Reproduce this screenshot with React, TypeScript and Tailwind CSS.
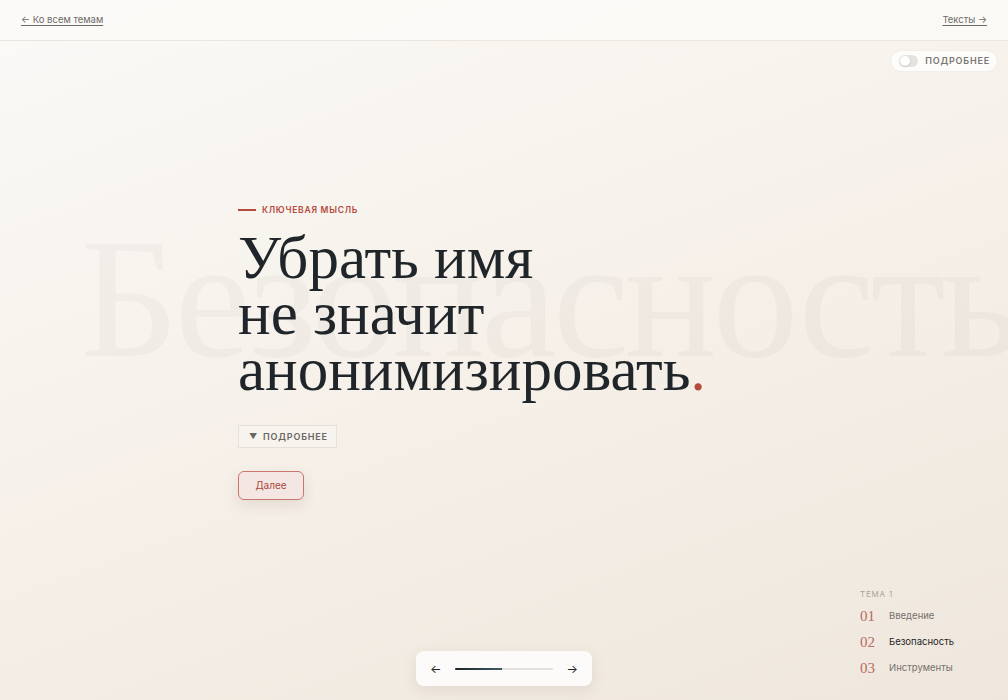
import React from "react";

export default function App() {
  return (
    <div
      className="relative w-[1008px] h-[700px] overflow-hidden bg-[linear-gradient(160deg,#fbfaf8_0%,#f6f1ea_45%,#efe7dd_100%)]"
      style={{ fontFamily: "Inter, 'Noto Sans', sans-serif" }}
    >
      {/* watermark */}
      <div
        className="absolute left-[80px] top-[212px] text-[172px] leading-none tracking-[-0.025em] text-[#2b2b2b]/[0.035] whitespace-nowrap select-none"
        style={{ fontFamily: "'Liberation Serif', serif" }}
      >
        Безопасность
      </div>

      {/* header */}
      <header className="relative h-[41px] flex items-center justify-between px-[21px] bg-[#fbfaf7]/80 border-b border-[#ebe6de]">
        <a className="text-[9.5px] text-[#6e6a66] underline underline-offset-2">← Ко всем темам</a>
        <a className="text-[9.5px] text-[#6e6a66] underline underline-offset-2">Тексты →</a>
      </header>

      {/* toggle */}
      <div className="absolute right-[10px] top-[50px] h-[22px] w-[108px] flex items-center gap-[7px] pl-[8px] pr-[7px] rounded-full bg-white/80 border border-[#f1ede7]">
        <div className="w-[24px] h-[12px] rounded-full bg-[#e6e3df] flex items-center px-[1px]">
          <div className="w-[10px] h-[10px] rounded-full bg-white shadow-sm" />
        </div>
        <span className="text-[9px] font-semibold tracking-[0.09em] text-[#7a7672]">ПОДРОБНЕЕ</span>
      </div>

      {/* main */}
      <main className="relative pl-[238px] pt-[163px]">
        <div className="flex items-center gap-[6px]">
          <div className="w-[18px] h-[2px] bg-[#b5493d]" />
          <span className="text-[8.5px] font-semibold tracking-[0.09em] text-[#b5493d]">КЛЮЧЕВАЯ МЫСЛЬ</span>
        </div>
        <h1
          className="mt-[13px] text-[61px] leading-[56px] text-[#1f2528]"
          style={{ fontFamily: "'Liberation Serif', serif" }}
        >
          Убрать имя
          <br />
          не значит
          <br />
          анонимизировать<span className="text-[#b5493d]">.</span>
        </h1>
        <button className="mt-[27px] h-[23px] w-[99px] px-[10px] flex items-center gap-[5px] border border-[#e6e1da] bg-[#f8f5f1]/60 text-[9px] font-semibold tracking-[0.09em] text-[#6a6662]">
          <span className="text-[8px]">▼</span>ПОДРОБНЕЕ
        </button>
        <button className="mt-[23px] w-[66px] h-[29px] rounded-[6px] border border-[#c9776c] bg-[#f4e7e3] text-[10px] text-[#a8483c] shadow-[0_6px_14px_rgba(120,80,60,0.12)]">
          Далее
        </button>
      </main>

      {/* toc */}
      <nav className="absolute left-[860px] top-[588px]">
        <div className="text-[8px] tracking-[0.1em] text-[#a9a39c]">ТЕМА 1</div>
        <ul className="mt-[8px] flex flex-col gap-[10px]">
          {[
            ["01", "Введение", false],
            ["02", "Безопасность", true],
            ["03", "Инструменты", false],
          ].map(([n, t, active]) => (
            <li key={n as string} className="flex items-center h-[16px]">
              <span
                className="w-[29px] text-[15px] text-[#b86a5f]"
                style={{ fontFamily: "'Liberation Serif', serif" }}
              >
                {n}
              </span>
              <span className={`text-[9.5px] ${active ? "text-[#1f2528]" : "text-[#76716c]"}`}>{t}</span>
            </li>
          ))}
        </ul>
      </nav>

      {/* bottom nav */}
      <div className="absolute left-[416px] top-[651px] w-[176px] h-[35px] rounded-[8px] bg-[#fcfbf9] shadow-[0_4px_14px_rgba(90,70,50,0.10)] flex items-center px-[14px] gap-[12px]">
        <span className="text-[12px] text-[#222] leading-none">←</span>
        <div className="flex-1 h-[2px] bg-[#e3e1dd] rounded-full overflow-hidden mx-[2px]">
          <div className="w-[48%] h-full bg-[linear-gradient(90deg,#1d2529,#3f5a60)]" />
        </div>
        <span className="text-[12px] text-[#222] leading-none">→</span>
      </div>
    </div>
  );
}
